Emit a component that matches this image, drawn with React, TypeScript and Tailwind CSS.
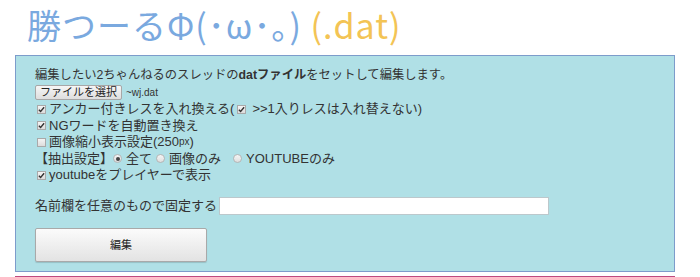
import React from 'react';

const font = { fontFamily: '"Noto Sans CJK JP", "Noto Sans", sans-serif' };
const rowFont = { fontFamily: '"Liberation Sans", "Noto Sans CJK JP", sans-serif' };

const Check: React.FC<{ on?: boolean }> = ({ on }) => (
  <span className="inline-flex w-[9px] h-[9px] mr-[3px] border border-[#a9a9a9] bg-gradient-to-b from-[#f4f4f4] to-[#dcdcdc] items-center justify-center shrink-0">
    {on && (
      <svg viewBox="0 0 8 8" className="w-[7px] h-[7px]">
        <path d="M1 4.2 L3 6.3 L7 1.5" fill="none" stroke="#333" strokeWidth="1.6" />
      </svg>
    )}
  </span>
);

const Radio: React.FC<{ on?: boolean }> = ({ on }) => (
  <span className="inline-flex w-[9px] h-[9px] mr-[4px] rounded-full border border-[#b5b5b5] bg-gradient-to-b from-[#f6f6f6] to-[#dedede] items-center justify-center shrink-0">
    {on && <span className="w-[4px] h-[4px] rounded-full bg-[#444]" />}
  </span>
);

export default function App() {
  return (
    <div className="w-[700px] h-[277px] bg-white overflow-hidden text-[#333]" style={font}>
      <h1 className="pl-[27px] h-[55px] text-[34px] leading-[49px] font-normal tracking-[1px] whitespace-nowrap">
        <span className="text-[#7aa9df]">勝つーるΦ(･ω･｡)</span>
        <span className="text-[#f3c455]"> (.dat)</span>
      </h1>

      <div className="ml-[15px] w-[660px] border border-[#7d9ccb] bg-[#b0e0e6] pl-[19px] pt-[11px] pb-[9px]">
        <p className="text-[12.3px] leading-[16px]" style={rowFont}>
          編集したい2ちゃんねるのスレッドの<b>datファイル</b>をセットして編集します。
        </p>
        <div className="flex items-center h-[18px]">
          <button className="h-[15px] px-[4px] border border-[#a7a7a7] rounded-[2px] bg-gradient-to-b from-[#f6f6f6] to-[#dedede] text-[11px] leading-[13px] text-[#222]" style={rowFont}>
            ファイルを選択
          </button>
          <span className="ml-[4px] text-[10px] leading-[13px]" style={rowFont}>~wj.dat</span>
        </div>
        <div className="pl-[2px] text-[13px] leading-[16.5px]" style={rowFont}>
          <div className="flex items-center h-[16.5px]">
            <Check on />アンカー付きレスを入れ換える(
            <span className="ml-[3px]" />
            <Check on />
            <span className="ml-[3px]">&gt;&gt;1入りレスは入れ替えない)</span>
          </div>
          <div className="flex items-center h-[16.5px]">
            <Check on />NGワードを自動置き換え
          </div>
          <div className="flex items-center h-[16.5px]">
            <Check />画像縮小表示設定(250<span className="text-[10px]">px</span>)
          </div>
          <div className="flex items-center h-[16.5px] -ml-[2px]">
            【抽出設定】
            <Radio on />全て
            <span className="ml-[4px]" />
            <Radio />画像のみ
            <span className="ml-[12px]" />
            <Radio />YOUTUBEのみ
          </div>
          <div className="flex items-center h-[16.5px]">
            <Check on />youtubeをプレイヤーで表示
          </div>
        </div>

        <div className="flex items-center h-[18px] mt-[13px] text-[13px]" style={rowFont}>
          <span className="mr-[2px]">名前欄を任意のもので固定する</span>
          <input type="text" className="w-[330px] h-[18px] bg-white border border-[#bcc8cc] outline-none" />
        </div>

        <button className="mt-[13px] w-[172px] h-[34px] border border-[#a9a9a9] rounded-[2px] bg-gradient-to-b from-[#fbfbfb] to-[#e3e3e3] shadow-[0_1px_1px_rgba(0,0,0,0.15)] text-[11px] text-[#222]">
          編集
        </button>
      </div>

      <div className="ml-[15px] w-[660px] mt-[4px] h-[2px] bg-[#c0497f]" />
    </div>
  );
}
